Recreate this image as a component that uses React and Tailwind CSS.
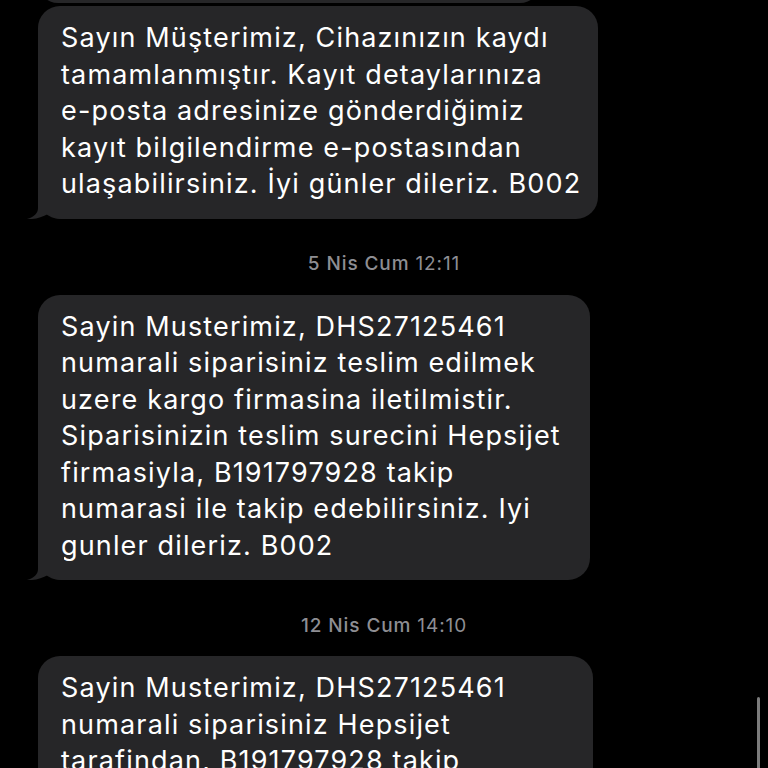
import React from "react";

const FONT = { fontFamily: 'Inter, "Liberation Sans", Arial, sans-serif' };

function Tail() {
  return (
    <svg
      className="absolute left-[-12px] bottom-0"
      width="40"
      height="24"
      viewBox="0 0 40 24"
    >
      <path
        d="M12 0 L12 13 C12 18.5 8 22 1 24 C8 24.6 16 22.5 22 19 C26 22 31 24 38 24 L38 0 Z"
        fill="#262628"
      />
    </svg>
  );
}

function Bubble({ lines, width, tail = true }) {
  return (
    <div
      className={`relative ${width} bg-[#262628] rounded-[22px] pl-[23px] pt-[14px] pb-[16px] text-white text-[27px] leading-[36.5px] tracking-[1.15px]`}
    >
      {lines.map((l, i) => (
        <div key={i} className="whitespace-nowrap">
          {l}
        </div>
      ))}
      {tail && <Tail />}
    </div>
  );
}

function Stamp({ date, time }) {
  return (
    <div className="mt-[36px] mb-[20px] h-[20px] flex items-center justify-center text-[19px] tracking-[0.9px] text-[#8e8e93] pr-[38px]">
      <span className="font-medium">{date}</span>
      <span className="ml-[6px]">{time}</span>
    </div>
  );
}

export default function App() {
  return (
    <div
      className="relative w-[768px] h-[768px] bg-black overflow-hidden"
      style={FONT}
    >
      <div className="flex flex-col pl-[38px]">
        <div className="w-[502px] h-[40px] mt-[-37px] mb-[3px] bg-[#262628] rounded-[22px]" />
        <Bubble
          width="w-[560px]"
          lines={[
            "Sayın Müşterimiz, Cihazınızın kaydı",
            "tamamlanmıştır. Kayıt detaylarınıza",
            "e-posta adresinize gönderdiğimiz",
            "kayıt bilgilendirme e-postasından",
            "ulaşabilirsiniz. İyi günler dileriz. B002",
          ]}
        />
        <Stamp date="5 Nis Cum" time="12:11" />
        <Bubble
          width="w-[552px]"
          lines={[
            "Sayin Musterimiz, DHS27125461",
            "numarali siparisiniz teslim edilmek",
            "uzere kargo firmasina iletilmistir.",
            "Siparisinizin teslim surecini Hepsijet",
            "firmasiyla, B191797928 takip",
            "numarasi ile takip edebilirsiniz. Iyi",
            "gunler dileriz. B002",
          ]}
        />
        <Stamp date="12 Nis Cum" time="14:10" />
        <Bubble
          width="w-[555px]"
          tail={false}
          lines={[
            "Sayin Musterimiz, DHS27125461",
            "numarali siparisiniz Hepsijet",
            "tarafindan, B191797928 takip",
            "numarasi ile teslim edilmistir.",
          ]}
        />
      </div>
      <div className="absolute left-[757px] top-[697px] w-[3px] h-[80px] rounded-full bg-[#7c7c7c]" />
    </div>
  );
}
